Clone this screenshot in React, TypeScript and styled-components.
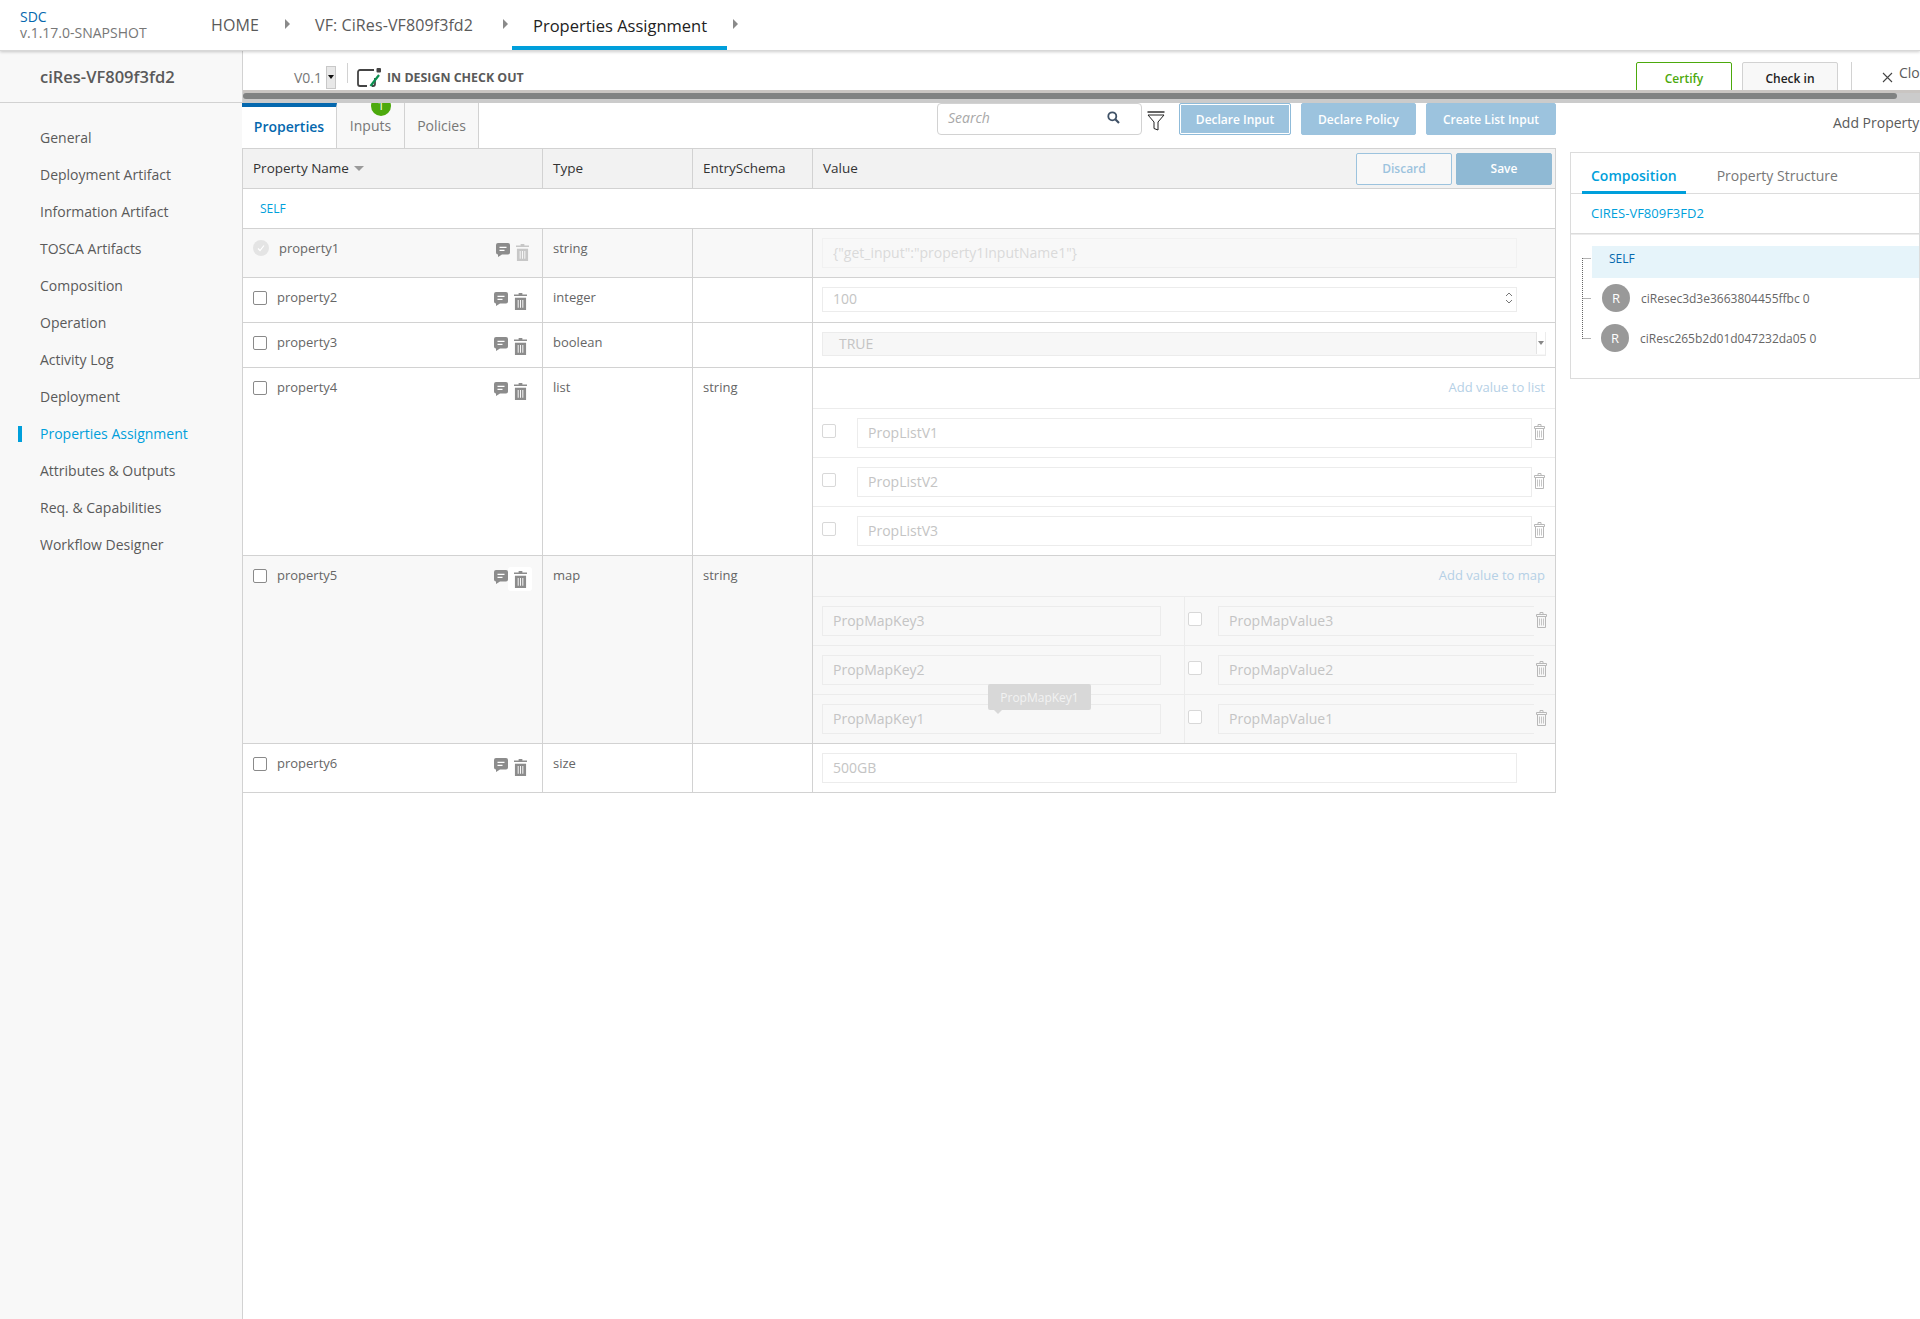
import styled, { createGlobalStyle } from 'styled-components';

const GlobalStyle = createGlobalStyle`
  html, body { margin: 0; padding: 0; background: #fff; overflow: hidden; }
  * { box-sizing: border-box; }
  body { font-family: "Open Sans", "Liberation Sans", sans-serif; color: #5a5a5a; }
`;

const Page = styled.div`
  width: 1920px;
  height: 1319px;
  overflow: hidden;
  display: flex;
  flex-direction: column;
`;

const Header = styled.header`
  height: 51px;
  flex: none;
  display: flex;
  background: #fff;
  border-bottom: 1px solid #d8d8d8;
  box-shadow: 0 1px 3px rgba(0, 0, 0, 0.2);
  position: relative;
  z-index: 2;
`;

const Brand = styled.div`
  width: 211px;
  padding: 9px 0 0 20px;
  font-size: 14px;
  line-height: 16px;
  color: #777;
  span { display: block; color: #0568ae; }
`;

const Crumb = styled.div<{ $active?: boolean; $w: number }>`
  width: ${({ $w }) => $w}px;
  height: 50px;
  padding: 4px 0 0 ${({ $active }) => ($active ? 21 : 0)}px;
  display: flex;
  align-items: center;
  font-size: ${({ $active }) => ($active ? 16.5 : 16)}px;
  letter-spacing: ${({ $active }) => ($active ? 0 : 0.1)}px;
  color: ${({ $active }) => ($active ? '#222' : '#5a5a5a')};
  border-bottom: 4px solid ${({ $active }) => ($active ? '#009fdb' : 'transparent')};
  white-space: nowrap;
`;

const CrumbArrow = styled.i<{ $w: number; $gap?: number }>`
  flex: none;
  width: ${({ $w }) => $w}px;
  margin-left: ${({ $gap }) => $gap ?? 0}px;
  height: 50px;
  display: flex;
  align-items: center;
  padding-bottom: 3px;
  &::after {
    content: '';
    display: block;
    border-left: 5px solid #8a8a8a;
    border-top: 5px solid transparent;
    border-bottom: 5px solid transparent;
  }
`;

const Body = styled.div`
  flex: 1;
  display: flex;
  min-height: 0;
`;

const Sidebar = styled.aside`
  width: 243px;
  flex: none;
  background: #f8f8f8;
  border-right: 1px solid #d2d2d2;
`;

const SideTitle = styled.div`
  height: 52px;
  padding: 0 0 0 40px;
  display: flex;
  align-items: center;
  font-size: 16.5px;
  font-weight: 600;
  color: #5a5a5a;
  border-bottom: 1px solid #d2d2d2;
`;

const SideNav = styled.nav`
  padding-top: 16px;
`;

const NavItem = styled.div<{ $active?: boolean }>`
  height: 37px;
  display: flex;
  align-items: center;
  padding-left: ${({ $active }) => ($active ? 18 : 40)}px;
  font-size: 14px;
  color: ${({ $active }) => ($active ? '#009fdb' : '#5a5a5a')};
  &::before {
    content: '';
    display: ${({ $active }) => ($active ? 'block' : 'none')};
    width: 4px;
    height: 16px;
    margin-right: 18px;
    background: #009fdb;
  }
`;

const Main = styled.main`
  width: 1677px;
  flex: none;
  display: flex;
  flex-direction: column;
`;

const Toolbar = styled.div`
  height: 39px;
  flex: none;
  display: flex;
  overflow: hidden;
`;

const ToolLeft = styled.div`
  width: 1393px;
  flex: none;
  display: flex;
  align-items: center;
  padding: 13px 0 0 51px;
`;

const Version = styled.span`
  font-size: 14px;
  color: #777;
  width: 32px;
`;

const VersionSelect = styled.i`
  width: 10px;
  height: 23px;
  margin-right: 11px;
  background: #e8e8e8;
  border: 1px solid #c8c8c8;
  display: flex;
  align-items: center;
  justify-content: center;
  &::after {
    content: '';
    border-top: 4px solid #111;
    border-left: 3px solid transparent;
    border-right: 3px solid transparent;
  }
`;

const VSep = styled.i`
  width: 1px;
  height: 20px;
  background: #d2d2d2;
  margin-right: 9px;
  margin-top: -8px;
`;

const StateLabel = styled.span`
  margin-left: 5px;
  font-size: 12.4px;
  font-weight: 700;
  color: #5a5a5a;
`;

const ToolRight = styled.div`
  flex: none;
  display: flex;
  align-items: flex-start;
  padding-top: 11px;
`;

const ActionButton = styled.div<{ $green?: boolean }>`
  width: 96px;
  height: 30px;
  margin-right: 10px;
  border: 1px solid ${({ $green }) => ($green ? '#4ca90c' : '#d2d2d2')};
  border-radius: 2px 2px 0 0;
  background: ${({ $green }) => ($green ? '#fff' : '#f8f8f8')};
  color: ${({ $green }) => ($green ? '#4ca90c' : '#222')};
  font-size: 12px;
  font-weight: 600;
  display: flex;
  align-items: center;
  justify-content: center;
  padding-top: 2px;
`;

const CloseBox = styled.div`
  height: 30px;
  margin-left: 3px;
  padding: 1px 0 0 30px;
  border-left: 1px solid #d2d2d2;
  display: flex;
  align-items: flex-start;
  gap: 6px;
  font-size: 14px;
  white-space: nowrap;
  color: #5a5a5a;
  svg { margin-top: 9px; }
`;

const ScrollTrack = styled.div`
  height: 13px;
  flex: none;
  background: #cbcbcb;
  border-top: 3px solid #c9c5c2;
  padding-bottom: 4px;
`;

const ScrollThumb = styled.div`
  width: 1654px;
  height: 6px;
  background: #808282;
  border-radius: 3px;
`;

const Content = styled.div`
  display: flex;
  align-items: flex-start;
`;

const Work = styled.div`
  width: 1314px;
  flex: none;
  margin-left: -1px;
`;

const WorkTop = styled.div`
  height: 45px;
  display: flex;
  justify-content: space-between;
`;

const Tabs = styled.div`
  display: flex;
`;

const Tab = styled.div<{ $active?: boolean; $w: number }>`
  width: ${({ $w }) => $w}px;
  position: relative;
  overflow: hidden;
  display: flex;
  align-items: center;
  justify-content: center;
  font-size: 14px;
  padding-bottom: ${({ $active }) => ($active ? 3 : 0)}px;
  color: ${({ $active }) => ($active ? '#0568ae' : '#777')};
  font-weight: ${({ $active }) => ($active ? 600 : 400)};
  background: ${({ $active }) => ($active ? '#fff' : '#f8f8f8')};
  border-right: 1px solid #d2d2d2;
  border-top: ${({ $active }) => ($active ? '4px solid #0568ae' : 'none')};
`;

const Badge = styled.span`
  position: absolute;
  top: -7px;
  left: 34px;
  width: 20px;
  height: 20px;
  border-radius: 50%;
  background: #4ca90c;
  color: #fff;
  font-size: 12px;
  line-height: 20px;
  text-align: center;
  font-weight: 400;
`;

const Tools = styled.div`
  display: flex;
  align-items: flex-start;
`;

const SearchBox = styled.div`
  width: 205px;
  height: 32px;
  border: 1px solid #d2d2d2;
  border-radius: 4px;
  display: flex;
  align-items: center;
  justify-content: space-between;
  padding: 0 21px 3px 10px;
  font-size: 14px;
  font-style: italic;
  color: #a8a8a8;
`;

const FilterWrap = styled.div`
  width: 37px;
  height: 32px;
  padding: 8px 0 0 5px;
`;

const BlueButton = styled.div<{ $w: number; $focus?: boolean }>`
  width: ${({ $w }) => $w}px;
  height: 32px;
  margin-left: ${({ $focus }) => ($focus ? 0 : 10)}px;
  border-radius: 2px;
  background: #9cc3de;
  border: 1px solid ${({ $focus }) => ($focus ? '#8fbbd9' : '#9cc3de')};
  box-shadow: ${({ $focus }) => ($focus ? 'inset 0 0 0 1px #fff' : 'none')};
  color: #fff;
  font-size: 12px;
  font-weight: 600;
  display: flex;
  align-items: center;
  justify-content: center;
`;

const Table = styled.div`
  border: 1px solid #d2d2d2;
  border-bottom: none;
`;

const Row = styled.div<{ $h: number; $shade?: boolean }>`
  height: ${({ $h }) => $h}px;
  display: grid;
  grid-template-columns: 300px 150px 120px 1fr;
  background: ${({ $shade }) => ($shade ? '#f8f8f8' : '#fff')};
  border-bottom: 1px solid #d2d2d2;
`;

const HeadRow = styled(Row)`
  background: #f2f2f2;
`;

const SelfRow = styled.div`
  height: 40px;
  padding-left: 17px;
  display: flex;
  align-items: center;
  font-size: 12px;
  color: #009fdb;
  border-bottom: 1px solid #d2d2d2;
`;

const HeadCell = styled.div<{ $last?: boolean }>`
  display: flex;
  align-items: center;
  padding: 0 0 2px 10px;
  font-size: 13.5px;
  font-weight: 500;
  color: #333;
  border-right: ${({ $last }) => ($last ? 'none' : '1px solid #d2d2d2')};
`;

const SortCaret = styled.i`
  margin: 2px 0 0 5px;
  border-top: 5px solid #9a9a9a;
  border-left: 5px solid transparent;
  border-right: 5px solid transparent;
`;

const HeadButtons = styled.div`
  margin: 2px 0 0 auto;
  padding-right: 3px;
  display: flex;
  gap: 4px;
`;

const Discard = styled.div`
  width: 96px;
  height: 32px;
  border: 1px solid #9cc3de;
  border-radius: 2px;
  color: #9cc3de;
  background: #f8f8f8;
  font-size: 12px;
  font-weight: 600;
  display: flex;
  align-items: center;
  justify-content: center;
`;

const Save = styled(Discard)`
  background: #8fb9d4;
  border-color: #8fb9d4;
  color: #fff;
`;

const NameCell = styled.div`
  border-right: 1px solid #d2d2d2;
  display: flex;
  align-items: flex-start;
  padding: 11px 0 0 10px;
  font-size: 13px;
  color: #666;
`;

const Check = styled.i<{ $faint?: boolean }>`
  flex: none;
  display: block;
  width: 14px;
  height: 14px;
  border: 1px solid ${({ $faint }) => ($faint ? '#d8d8d8' : '#8a8a8a')};
  border-radius: 2px;
  background: #fff;
  margin-top: ${({ $faint }) => ($faint ? 0 : 2)}px;
`;

const DoneMark = styled.i`
  flex: none;
  width: 16px;
  height: 16px;
  border-radius: 50%;
  background: #e4e4e4;
  color: #fff;
  display: flex;
  align-items: center;
  justify-content: center;
`;

const PropName = styled.span`
  margin-left: 10px;
  width: 217px;
  line-height: 17px;
`;

const IconPair = styled.div`
  display: flex;
  align-items: flex-start;
  margin-top: 3px;
`;

const TrashBox = styled.span<{ $hover?: boolean; $off?: boolean }>`
  width: 24px;
  height: 24px;
  margin-top: -3px;
  display: flex;
  align-items: center;
  justify-content: center;
  border-radius: 3px;
  background: ${({ $hover }) => ($hover ? '#fff' : 'transparent')};
  opacity: ${({ $off }) => ($off ? 0.45 : 1)};
`;

const TypeCell = styled.div`
  border-right: 1px solid #d2d2d2;
  padding: 11px 0 0 10px;
  font-size: 13px;
  line-height: 17px;
  color: #666;
`;

const ValueCell = styled.div<{ $top: number }>`
  min-width: 0;
  padding: ${({ $top }) => $top}px 0 0 9px;
  position: relative;
`;

const Field = styled.input<{ $w: string; $h: number; $shade?: boolean }>`
  display: block;
  width: ${({ $w }) => $w};
  height: ${({ $h }) => $h}px;
  padding: 0 10px 2px;
  border: 1px solid #ececec;
  background: ${({ $shade }) => ($shade ? '#f8f8f8' : '#fff')};
  font: 14px "Open Sans", sans-serif;
  color: #c4c4c4;
  outline: none;
`;

const LockedField = styled(Field)`
  border-color: #f1f1f1;
  color: #dadada;
`;

const Spinner = styled.svg`
  position: absolute;
  left: 691px;
  top: 12px;
`;

const SelectBox = styled.div`
  width: 724px;
  height: 24px;
  padding: 0 0 2px 16px;
  display: flex;
  align-items: center;
  justify-content: space-between;
  border: 1px solid #ececec;
  background: #f7f7f7;
  font-size: 14px;
  color: #c4c4c4;
`;

const SelectArrow = styled.i`
  width: 9px;
  height: 22px;
  background: #fff;
  border-left: 1px solid #e4e4e4;
  display: flex;
  align-items: center;
  justify-content: center;
  &::after {
    content: '';
    border-top: 4px solid #888;
    border-left: 3px solid transparent;
    border-right: 3px solid transparent;
  }
`;

const Nested = styled.div`
  min-width: 0;
`;

const AddRow = styled.div`
  height: 40px;
  padding: 0 10px 2px 0;
  display: flex;
  align-items: center;
  justify-content: flex-end;
  font-size: 13px;
  color: #b5d0e6;
`;

const ListRow = styled.div`
  height: 49px;
  border-top: 1px solid #ececec;
  display: flex;
  align-items: flex-start;
  padding: 9px 0 0 9px;
`;

const ListCheck = styled.span`
  width: 35px;
  flex: none;
  padding-top: 6px;
`;

const TrashSlot = styled.span`
  padding-top: 5px;
  margin-left: 2px;
`;

const MapRow = styled.div`
  height: 49px;
  border-top: 1px solid #ececec;
  display: grid;
  grid-template-columns: 372px 1fr;
`;

const MapKey = styled.div`
  position: relative;
  padding: 9px 0 0 9px;
  border-right: 1px solid #ececec;
`;

const MapValue = styled.div`
  display: flex;
  align-items: flex-start;
  padding: 9px 0 0 3px;
`;

const MapCheck = styled.span`
  width: 30px;
  flex: none;
  padding-top: 6px;
`;

const MapField = styled(Field)`
  border-right: none;
`;

const Tip = styled.div`
  position: absolute;
  left: 175px;
  top: -11px;
  width: 103px;
  height: 26px;
  background: #d8d8d8;
  border-radius: 2px;
  color: #f2f2f2;
  font-size: 12px;
  display: flex;
  align-items: center;
  justify-content: center;
  &::after {
    content: '';
    position: absolute;
    left: 6px;
    bottom: -4px;
    border-top: 4px solid #d8d8d8;
    border-left: 4px solid transparent;
    border-right: 4px solid transparent;
  }
`;

const RightCol = styled.aside`
  width: 350px;
  flex: none;
  margin-left: 14px;
`;

const AddProperty = styled.div`
  height: 49px;
  padding: 10px 0 0 263px;
  font-size: 14px;
  line-height: 20px;
  white-space: nowrap;
  overflow: hidden;
  color: #5a5a5a;
`;

const Panel = styled.div`
  height: 227px;
  border: 1px solid #dcdcdc;
  overflow: hidden;
`;

const PanelTabs = styled.div`
  height: 41px;
  display: flex;
  padding-left: 11px;
  border-bottom: 1px solid #dcdcdc;
`;

const PanelTab = styled.div<{ $active?: boolean }>`
  height: 41px;
  padding: 6px 9px 0;
  margin-right: ${({ $active }) => ($active ? 22 : 0)}px;
  display: flex;
  align-items: center;
  font-size: 14px;
  font-weight: ${({ $active }) => ($active ? 600 : 400)};
  color: ${({ $active }) => ($active ? '#009fdb' : '#777')};
  border-bottom: 3px solid ${({ $active }) => ($active ? '#009fdb' : 'transparent')};
`;

const PanelCrumb = styled.div`
  height: 40px;
  padding: 0 0 2px 20px;
  display: flex;
  align-items: center;
  font-size: 13px;
  color: #009fdb;
  border-bottom: 1px solid #dcdcdc;
  box-shadow: 0 1px 0 #ececec;
`;

const Tree = styled.div`
  position: relative;
  padding: 12px 0 0 21px;
`;

const TreeLines = styled.svg`
  position: absolute;
  left: 11px;
  top: 24px;
`;

const TreeSelf = styled.div`
  height: 32px;
  padding: 0 0 8px 17px;
  display: flex;
  align-items: center;
  background: #e6f4fa;
  color: #0568ae;
  font-size: 12px;
`;

const TreeItem = styled.div<{ $indent: number }>`
  height: 40px;
  display: flex;
  align-items: center;
  gap: 11px;
  padding-left: ${({ $indent }) => $indent}px;
  font-size: 12px;
  color: #666;
`;

const Avatar = styled.span`
  width: 28px;
  height: 28px;
  border-radius: 50%;
  background: #999;
  color: #fff;
  font-size: 13px;
  display: flex;
  align-items: center;
  justify-content: center;
`;

const NAV = [
  'General',
  'Deployment Artifact',
  'Information Artifact',
  'TOSCA Artifacts',
  'Composition',
  'Operation',
  'Activity Log',
  'Deployment',
  'Properties Assignment',
  'Attributes & Outputs',
  'Req. & Capabilities',
  'Workflow Designer',
];

const CommentIcon = () => (
  <svg width="14" height="14" viewBox="0 0 14 14.6" preserveAspectRatio="none">
    <path d="M2 0h10a2 2 0 0 1 2 2v8a2 2 0 0 1-2 2H6l-4 2.5V12a2 2 0 0 1-2-2V2a2 2 0 0 1 2-2z" fill="#8c8c8c" />
    <path d="M3.5 4h7v1.3h-7zM3.5 7h5v1.3h-5z" fill="#fff" />
  </svg>
);

const TrashIcon = () => (
  <svg width="13" height="17" viewBox="0 0 14 18" preserveAspectRatio="none">
    <path d="M5 0h4v1.6h5v1.7H0V1.6h5z" fill="#8c8c8c" />
    <path d="M1 5h12v13H1z" fill="#8c8c8c" />
    <path d="M4 7.5h1v8H4zM6.5 7.5h1v8h-1zM9 7.5h1v8H9z" fill="#fff" />
  </svg>
);

const SmallTrash = () => (
  <svg width="11" height="16" viewBox="0 0 11 16" fill="none" stroke="#b8b8b8">
    <path d="M4 2.5V.5h3v2M.5 2.5h10v2H.5zM1.5 4.5h8v11h-8z" />
    <path d="M3.5 6.5v7M5.5 6.5v7M7.5 6.5v7" strokeWidth=".8" />
  </svg>
);

const SearchIcon = () => (
  <svg width="13" height="13" viewBox="0 0 13 13" fill="none" stroke="#3f5166" strokeWidth="1.8">
    <circle cx="5.3" cy="5.3" r="4" />
    <path d="M8.3 8.3L12 12" strokeWidth="2.2" />
  </svg>
);

const FilterIcon = () => (
  <svg width="18" height="20" viewBox="0 0 18 20" fill="none" stroke="#222" strokeWidth="1">
    <path d="M.5 1h17" strokeWidth="1.4" />
    <path d="M1 4h16l-6 7v8l-4-1.5V11z" />
  </svg>
);

const StateIcon = () => (
  <svg width="25" height="19" viewBox="0 0 25 19">
    <path d="M17 2H3a2 2 0 0 0-2 2v12a2 2 0 0 0 2 2h7" fill="none" stroke="#444" strokeWidth="1.8" />
    <path d="M18 10v6a2 2 0 0 1-2 2h-1" fill="none" stroke="#444" strokeWidth="1.8" />
    <rect x="19.5" y="0" width="4.5" height="4.5" rx="1" fill="#444" />
    <path d="M22 7l-8.5 11" stroke="#0a8f4f" strokeWidth="2.2" />
  </svg>
);

const CheckMark = () => (
  <svg width="10" height="10" viewBox="0 0 10 10" fill="none" stroke="#fff" strokeWidth="1.2">
    <path d="M2 5.5l2 2 4-5" />
  </svg>
);

const CloseIcon = () => (
  <svg width="11" height="11" viewBox="0 0 11 11" stroke="#444" strokeWidth="1.1">
    <path d="M1 1l9 9M10 1l-9 9" />
  </svg>
);

const NameBlock = ({ name, locked, hover }: { name: string; locked?: boolean; hover?: boolean }) => (
  <NameCell>
    {locked ? <DoneMark><CheckMark /></DoneMark> : <Check />}
    <PropName>{name}</PropName>
    <IconPair>
      <CommentIcon />
      <TrashBox $hover={hover} $off={locked}><TrashIcon /></TrashBox>
    </IconPair>
  </NameCell>
);

const LIST_VALUES = ['PropListV1', 'PropListV2', 'PropListV3'];
const MAP_VALUES = [
  ['PropMapKey3', 'PropMapValue3'],
  ['PropMapKey2', 'PropMapValue2'],
  ['PropMapKey1', 'PropMapValue1'],
];

const App = () => (
  <Page>
    <GlobalStyle />
    <Header>
      <Brand><span>SDC</span>v.1.17.0-SNAPSHOT</Brand>
      <Crumb $w={74}>HOME</Crumb>
      <CrumbArrow $w={30} />
      <Crumb $w={188}>VF: CiRes-VF809f3fd2</Crumb>
      <CrumbArrow $w={9} />
      <Crumb $w={215} $active>Properties Assignment</Crumb>
      <CrumbArrow $w={20} $gap={6} />
    </Header>
    <Body>
      <Sidebar>
        <SideTitle>ciRes-VF809f3fd2</SideTitle>
        <SideNav>
          {NAV.map((item) => (
            <NavItem key={item} $active={item === 'Properties Assignment'}>{item}</NavItem>
          ))}
        </SideNav>
      </Sidebar>
      <Main>
        <Toolbar>
          <ToolLeft>
            <Version>V0.1</Version>
            <VersionSelect />
            <VSep />
            <StateIcon />
            <StateLabel>IN DESIGN CHECK OUT</StateLabel>
          </ToolLeft>
          <ToolRight>
            <ActionButton $green>Certify</ActionButton>
            <ActionButton>Check in</ActionButton>
            <CloseBox><CloseIcon />Close</CloseBox>
          </ToolRight>
        </Toolbar>
        <ScrollTrack><ScrollThumb /></ScrollTrack>
        <Content>
          <Work>
            <WorkTop>
              <Tabs>
                <Tab $w={95} $active>Properties</Tab>
                <Tab $w={68}>Inputs<Badge>1</Badge></Tab>
                <Tab $w={74}>Policies</Tab>
              </Tabs>
              <Tools>
                <SearchBox>Search<SearchIcon /></SearchBox>
                <FilterWrap><FilterIcon /></FilterWrap>
                <BlueButton $w={112} $focus>Declare Input</BlueButton>
                <BlueButton $w={115}>Declare Policy</BlueButton>
                <BlueButton $w={130}>Create List Input</BlueButton>
              </Tools>
            </WorkTop>
            <Table>
              <HeadRow $h={40}>
                <HeadCell>Property Name<SortCaret /></HeadCell>
                <HeadCell>Type</HeadCell>
                <HeadCell>EntrySchema</HeadCell>
                <HeadCell $last>
                  Value
                  <HeadButtons>
                    <Discard>Discard</Discard>
                    <Save>Save</Save>
                  </HeadButtons>
                </HeadCell>
              </HeadRow>
              <SelfRow>SELF</SelfRow>
              <Row $h={49} $shade>
                <NameBlock name="property1" locked />
                <TypeCell>string</TypeCell>
                <TypeCell />
                <ValueCell $top={9}>
                  <LockedField readOnly $shade $w="695px" $h={30} value={'{"get_input":"property1InputName1"}'} />
                </ValueCell>
              </Row>
              <Row $h={45}>
                <NameBlock name="property2" />
                <TypeCell>integer</TypeCell>
                <TypeCell />
                <ValueCell $top={9}>
                  <Field readOnly $w="695px" $h={25} value="100" />
                  <Spinner width="10" height="16" viewBox="0 0 10 16" fill="none" stroke="#777">
                    <path d="M2 6l3-3 3 3M2 10l3 3 3-3" />
                  </Spinner>
                </ValueCell>
              </Row>
              <Row $h={45}>
                <NameBlock name="property3" />
                <TypeCell>boolean</TypeCell>
                <TypeCell />
                <ValueCell $top={9}>
                  <SelectBox>TRUE<SelectArrow /></SelectBox>
                </ValueCell>
              </Row>
              <Row $h={188}>
                <NameBlock name="property4" />
                <TypeCell>list</TypeCell>
                <TypeCell>string</TypeCell>
                <Nested>
                  <AddRow>Add value to list</AddRow>
                  {LIST_VALUES.map((v) => (
                    <ListRow key={v}>
                      <ListCheck><Check $faint /></ListCheck>
                      <Field readOnly $w="675px" $h={30} value={v} />
                      <TrashSlot><SmallTrash /></TrashSlot>
                    </ListRow>
                  ))}
                </Nested>
              </Row>
              <Row $h={188} $shade>
                <NameBlock name="property5" hover />
                <TypeCell>map</TypeCell>
                <TypeCell>string</TypeCell>
                <Nested>
                  <AddRow>Add value to map</AddRow>
                  {MAP_VALUES.map(([k, v], i) => (
                    <MapRow key={k}>
                      <MapKey>
                        <Field readOnly $shade $w="339px" $h={30} value={k} />
                        {i === 2 && <Tip>{k}</Tip>}
                      </MapKey>
                      <MapValue>
                        <MapCheck><Check $faint /></MapCheck>
                        <MapField readOnly $shade $w="316px" $h={30} value={v} />
                        <TrashSlot><SmallTrash /></TrashSlot>
                      </MapValue>
                    </MapRow>
                  ))}
                </Nested>
              </Row>
              <Row $h={49}>
                <NameBlock name="property6" />
                <TypeCell>size</TypeCell>
                <TypeCell />
                <ValueCell $top={9}>
                  <Field readOnly $w="695px" $h={30} value="500GB" />
                </ValueCell>
              </Row>
            </Table>
          </Work>
          <RightCol>
            <AddProperty>Add Property</AddProperty>
            <Panel>
              <PanelTabs>
                <PanelTab $active>Composition</PanelTab>
                <PanelTab>Property Structure</PanelTab>
              </PanelTabs>
              <PanelCrumb>CIRES-VF809F3FD2</PanelCrumb>
              <Tree>
                <TreeLines width="10" height="82" viewBox="0 0 10 82" fill="none" stroke="#666" strokeDasharray="1 1">
                  <path d="M.5 0v81M.5 .5H9M.5 40.5H9M.5 80.5H9" />
                </TreeLines>
                <TreeSelf>SELF</TreeSelf>
                <TreeItem $indent={10}><Avatar>R</Avatar>ciResec3d3e3663804455ffbc 0</TreeItem>
                <TreeItem $indent={9}><Avatar>R</Avatar>ciResc265b2d01d047232da05 0</TreeItem>
              </Tree>
            </Panel>
          </RightCol>
        </Content>
      </Main>
    </Body>
  </Page>
);

export default App;
